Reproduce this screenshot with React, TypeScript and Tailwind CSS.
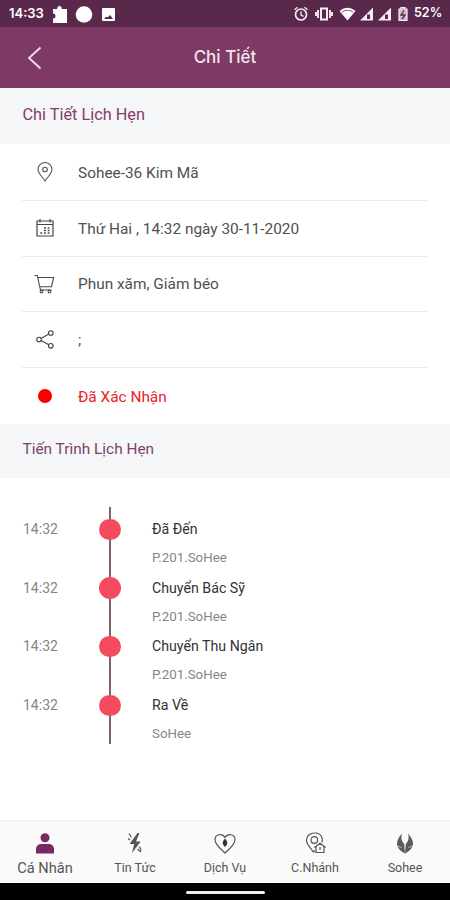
import { ReactNode } from "react";

const INFO_ROWS: { icon: ReactNode; text: string; danger?: boolean }[] = [
  { icon: <PinIcon />, text: "Sohee-36 Kim Mã" },
  { icon: <CalendarIcon />, text: "Thứ Hai , 14:32 ngày 30-11-2020" },
  { icon: <CartIcon />, text: "Phun xăm, Giảm béo" },
  { icon: <ShareIcon />, text: ";" },
  {
    icon: <span className="size-3.5 rounded-full bg-[#fe0000]" />,
    text: "Đã Xác Nhận",
    danger: true,
  },
];

const STEPS = [
  { time: "14:32", title: "Đã Đến", place: "P.201.SoHee" },
  { time: "14:32", title: "Chuyển Bác Sỹ", place: "P.201.SoHee" },
  { time: "14:32", title: "Chuyển Thu Ngân", place: "P.201.SoHee" },
  { time: "14:32", title: "Ra Về", place: "SoHee" },
];

const TABS = [
  { label: "Cá Nhân", icon: <UserIcon />, active: true },
  { label: "Tin Tức", icon: <BoltIcon /> },
  { label: "Dịch Vụ", icon: <HeartIcon /> },
  { label: "C.Nhánh", icon: <BranchIcon /> },
  { label: "Sohee", icon: <LotusIcon /> },
];

function PinIcon() {
  return (
    <svg width="16" height="20" viewBox="0 0 16 20" fill="none" stroke="#555" strokeWidth="1.1">
      <path d="M8 19C6 15.5 1 11.5 1 7.5a7 7 0 0 1 14 0C15 11.5 10 15.5 8 19z" />
      <circle cx="8" cy="7.5" r="2.3" />
    </svg>
  );
}

function CalendarIcon() {
  return (
    <svg width="18" height="18" viewBox="0 0 18 18" fill="none" stroke="#444" strokeWidth="1.2">
      <path d="M1 2h16v15H1zM1 5.5h16M4 0v3.5M14 0v3.5" />
      <path
        d="M8 9h1.8M11.7 9h1.8M8 11.5h1.8M11.700 11.5h1.8M4.300 14h1.8M8 14h1.8M11.7 14h1.8"
        strokeWidth="1.7"
      />
    </svg>
  );
}

function CartIcon() {
  return (
    <svg width="21" height="20" viewBox="0 0 21 20" fill="none" stroke="#4a4a4a" strokeWidth="1.1">
      <path d="M.5 1.500h2.7L6.5 16h11M3.7 3.500h16l-2.2 9.200H5.8" />
      <circle cx="7.5" cy="17.5" r="1.4" />
      <circle cx="15.5" cy="17.5" r="1.4" />
    </svg>
  );
}

function ShareIcon() {
  return (
    <svg width="18" height="19" viewBox="0 0 18 19" fill="none" stroke="#444" strokeWidth="1.1">
      <circle cx="3" cy="9.5" r="2.3" />
      <circle cx="14.8" cy="3" r="2.3" />
      <circle cx="14.8" cy="15.8" r="2.3" />
      <path d="M5 8.400l7.800-4.300M5 10.600l7.800 4.200" />
    </svg>
  );
}

function UserIcon() {
  return (
    <svg width="20" height="21" viewBox="0 0 20 21" fill="#762a60">
      <circle cx="10" cy="4.8" r="4.5" />
      <path d="M1 20.500v-4.500A5 5 0 0 1 6 11h8a5 5 0 0 1 5 5v4.500z" />
    </svg>
  );
}

function BoltIcon() {
  return (
    <svg width="16" height="22" viewBox="0 0 16 22" fill="#555">
      <path d="M10.500 1L2.500 12h4.700L5 21l8.700-11.500H9L12.500 1z" />
      <path d="M2 1.500l2.500 4M1 6.500l2 1.500M12.500 14.500l1.500 4M10.500 17l3.500 3" stroke="#555" strokeWidth="1.2" />
    </svg>
  );
}

function HeartIcon() {
  return (
    <svg width="22" height="21" viewBox="0 0 22 21" fill="none" stroke="#555" strokeWidth="1.2">
      <path d="M11 20C7 16 1 12 1 6.500 1 1.500 8-.500 11 4.500c3-5 10-3 10 2 0 5.500-6 9.500-10 13.500z" />
      <path
        d="M11 5.500c2.300 2.500 2.900 4.500 1.700 6.500L11 14l-1.700-2C8.100 10 8.700 8 11 5.500z"
        fill="#333"
        stroke="none"
      />
    </svg>
  );
}

function BranchIcon() {
  return (
    <svg width="21" height="22" viewBox="0 0 21 22" fill="none" stroke="#555" strokeWidth="1.2">
      <path d="M16.800 10.500c.7-1.500.7-2.500.4-4.100C16.300 2.500 13 1 9.500 1 5 1 1.500 4 1.500 8.500c0 4 4.500 8 7 11.500l1.300-1.500" />
      <circle cx="9.3" cy="8" r="3.3" />
      <path d="M9.500 15.500l5.500-4.300 5.500 4.300M11 14.800v5.700h8v-5.700M15 15v3" />
    </svg>
  );
}

function LotusIcon() {
  return (
    <svg width="18" height="21" viewBox="0 0 18 21" fill="#5b5b5b">
      <path d="M6 .5C4.500 4.500 5.500 8 8.200 11L9 20.500C4.500 18 1 15 1 10.500 1 6.500 3.500 3.500 6 .5z" />
      <path d="M12 .5c1.500 4 .5 7.500-2.200 10.500L9 20.500c4.500-2.500 8-5.500 8-10 0-4-2.500-7-5-10z" />
      <path d="M1.500 13l4 1.500M16.500 13l-4 1.500" stroke="#fafafa" strokeWidth=".6" />
    </svg>
  );
}

function StatusBar() {
  return (
    <div className="flex h-[27px] shrink-0 items-center bg-[#59284a] pr-[7px] pl-[9px] font-['Inter',sans-serif] text-white">
      <span className="w-[43px] text-[13px] font-semibold">14:33</span>
      <svg className="shrink-0" width="66" height="20" viewBox="0 0 66 20" fill="white">
        <path d="M1 5h4.300a2.300 2.300 0 1 1 4.400 0H15v14H1v-4.500a2.500 2.500 0 0 0 0-5z" />
        <circle cx="32" cy="10.5" r="8.3" />
        <path
          fillRule="evenodd"
          d="M51 4h11q1 0 1 1v11q0 1-1 1H51q-1 0-1-1V5q0-1 1-1zm1 11h9l-3-4-2.300 2.500-1.500-1z"
        />
      </svg>
      <svg className="ml-auto shrink-0" width="117" height="18" viewBox="0 0 117 18" fill="none" stroke="#f5edf3">
        <circle cx="8" cy="9.5" r="5.5" strokeWidth="1.7" />
        <path d="M8 6.200V10l2.500 1.300M1.500 4.800l3-2.500M14.500 4.800l-3-2.500" strokeWidth="1.3" />
        <path d="M28 3.500h6v11h-6z" strokeWidth="2" />
        <path d="M25 5v8M37 5v8M23 7v4M39 7v4" strokeWidth="1.9" />
        <path d="M46.500 6q8-6.500 16 0l-8 9.500z" fill="white" stroke="none" />
        <path d="M48.800 7.200q5.700-4 11.400 0" stroke="#59284a" strokeWidth=".8" />
        <path
          fillRule="evenodd"
          d="M67 15.500L80 2.500v13zm7-1.500h3V9.500h-3zM85 15.500l13-13v13zm7-1.500h3V9.500h-3z"
          fill="#f5edf3"
          stroke="none"
        />
        <path d="M106 4h2V2.500h4V4h2v11.500h-8z" fill="#cbbbc7" strokeWidth="1.2" />
        <path d="M111 5.500l-3 4.500h4l-3 4" stroke="#59284a" strokeWidth="1.3" />
      </svg>
      <span className="ml-1 w-[29px] whitespace-nowrap text-[12.5px] font-semibold">52%</span>
    </div>
  );
}

function SectionTitle({ children, className }: { children: string; className: string }) {
  return (
    <h2 className={`shrink-0 bg-[#f4f6f8] pl-[22.5px] text-[#824069] ${className}`}>{children}</h2>
  );
}

export default function App() {
  return (
    <div className="flex h-[900px] w-[450px] flex-col overflow-hidden bg-white font-['Roboto',sans-serif]">
      <StatusBar />
      <header className="grid h-[61px] shrink-0 grid-cols-[70px_1fr_70px] items-center bg-[#7e3a65] text-[#f3e3ee]">
        <svg
          className="ml-[27px]"
          width="16"
          height="24"
          viewBox="0 0 16 24"
          fill="none"
          stroke="currentColor"
          strokeWidth="1.8"
        >
          <path d="M13.500 1.500L2 12l11.500 10.500" />
        </svg>
        <h1 className="pt-px text-center font-['Inter',sans-serif] text-[17px] font-medium">Chi Tiết</h1>
      </header>

      <SectionTitle className="h-14 text-[16.3px] leading-[54px]">Chi Tiết Lịch Hẹn</SectionTitle>
      <ul className="h-[280px] shrink-0 px-[22px] pt-px">
        {INFO_ROWS.map((row) => (
          <li
            key={row.text}
            className="flex h-[55.8px] items-center border-b border-[#ececee] last:border-0"
          >
            <span className="flex w-[45px] justify-center">{row.icon}</span>
            <span
              className={`ml-[11px] pt-0.5 text-[15.4px] whitespace-nowrap ${row.danger ? "text-[#e8221f]" : "text-[#505050]"}`}
            >
              {row.text}
            </span>
          </li>
        ))}
      </ul>

      <SectionTitle className="h-[54px] text-[15.4px] leading-[51px]">Tiến Trình Lịch Hẹn</SectionTitle>
      <div className="grid h-[265px] shrink-0 grid-cols-[99px_22px_1fr] pt-[29px]">
        <ul className="pl-[23px]">
          {STEPS.map((step, i) => (
            <li key={i} className="h-[58.7px] text-[14px] leading-[44px] text-[#858585]">
              {step.time}
            </li>
          ))}
        </ul>
        <div className="h-[237px] bg-[linear-gradient(#81606f,#81606f)] bg-[length:2px_100%] bg-center bg-no-repeat pt-[11.5px]">
          {STEPS.map((step, i) => (
            <div key={i} className="h-[58.7px]">
              <div className="size-[21.5px] rounded-full bg-[#f44a5e]" />
            </div>
          ))}
        </div>
        <ul className="pl-[31px] pt-3">
          {STEPS.map((step, i) => (
            <li key={i} className="h-[58.7px]">
              <p className="text-[14.2px] leading-5 text-[#333]">{step.title}</p>
              <p className="mt-[9px] text-[13.3px] leading-5 text-[#858585]">{step.place}</p>
            </li>
          ))}
        </ul>
      </div>

      <nav className="mt-auto grid h-[63px] shrink-0 grid-cols-5 border-t border-[#f2f2f2] bg-[#fafafa]">
        {TABS.map((tab) => (
          <div key={tab.label} className="flex flex-col items-center pt-[11px] text-[#555]">
            <span className="flex h-[22px] items-center">{tab.icon}</span>
            <span className={`mt-1 leading-5 ${tab.active ? "text-[14.6px]" : "text-[12.5px]"}`}>
              {tab.label}
            </span>
          </div>
        ))}
      </nav>
      <div className="flex h-[17px] shrink-0 justify-center bg-black pt-2">
        <div className="h-[3px] w-[79px] rounded-full bg-[#eee]" />
      </div>
    </div>
  );
}
